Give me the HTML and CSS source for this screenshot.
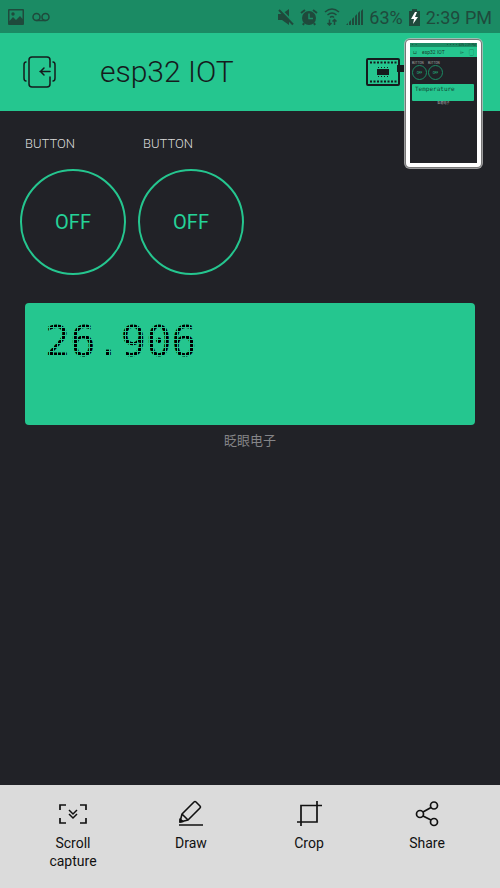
FILE: index.html
```html
<!DOCTYPE html>
<html lang="en">
<head>
<meta charset="utf-8">
<meta name="viewport" content="width=device-width, initial-scale=1">
<title>esp32 IOT</title>
<link rel="stylesheet" href="styles.css">
</head>
<body>
<div class="status">
  <svg width="16" height="16" viewBox="0 0 16 16" aria-hidden="true"><path fill="currentColor" fill-rule="evenodd" d="M1 0h14a1 1 0 0 1 1 1v14a1 1 0 0 1-1 1H1a1 1 0 0 1-1-1V1a1 1 0 0 1 1-1zm.5 1.500v10.500L5 8l3 3 4-4 2.500 3V1.500z"/><circle cx="5" cy="5" r="1.700" fill="currentColor"/></svg>
  <svg width="18" height="10" viewBox="0 0 18 10" fill="none" stroke="currentColor" stroke-width="1.500" aria-hidden="true"><circle cx="4.500" cy="5" r="3.500"/><circle cx="13.500" cy="5" r="3.500"/><path d="M4.500 8.500h9"/></svg>
  <div class="status-right">
    <svg width="16" height="17" viewBox="0 0 16 17" aria-hidden="true"><path fill="currentColor" d="M0 5h4L11 0v16l-7-5H0z"/><path d="M2 0l14 14" stroke="#1b8b64" stroke-width="2"/><path d="M1 1l14 14.500" stroke="currentColor" stroke-width="2"/></svg>
    <svg width="18" height="17" viewBox="0 0 18 17" aria-hidden="true"><circle cx="9" cy="9" r="7" fill="currentColor"/><path d="M1 4l4-3M17 4l-4-3M4 14l-1 2M14 14l1 2" stroke="currentColor" stroke-width="2"/><path d="M9 4.500V9.500h4" fill="none" stroke="#1b8b64" stroke-width="1.500"/></svg>
    <svg width="16" height="18" viewBox="0 0 16 18" fill="none" stroke="currentColor" stroke-width="1.500" aria-hidden="true"><path d="M1 4q7-6 14 0M3.500 7q4.500-4 9 0M6 9.500q2-2 4 0M5.500 11.500V17M3.500 15l2 2 2-2M10.500 17v-5.500M8.500 13.500l2-2 2 2"/></svg>
    <svg width="17" height="17" viewBox="0 0 17 17" aria-hidden="true"><path fill="currentColor" d="M0 16l2-2v2zM3 13l2-2v5H3zM6 10l2-2v8H6zM9 7l2-2v11H9zM12 4l2-2v14h-2zM15 2l2-2v16h-2z"/></svg>
    <span class="percent">63%</span>
    <svg class="battery" width="11" height="17" viewBox="0 0 11 17" aria-hidden="true"><path fill="currentColor" d="M3 0h5v2h3v15H0V2h3z"/><path fill="#fff" d="M6 3L2 10h3l-1 5 5-7H6l2-5z"/></svg>
    <time>2:39 PM</time>
  </div>
</div>
<header class="header">
  <button class="icon-button" aria-label="Exit project">
    <svg width="34" height="32" viewBox="0 0 34 32" fill="none" stroke="currentColor" stroke-width="1.500" stroke-linecap="round" aria-hidden="true"><path d="M28 11V4q0-3-3-3H10Q7 1 7 4v24q0 3 3 3h15q3 0 3-3v-7M28 15.500H18M22 12l-3.500 3.500L22 19M4 6Q2 6 2 9v13q0 3 2 3M31 6q2 0 2 3v13q0 3-2 3"/></svg>
  </button>
  <h1>esp32 IOT</h1>
  <button class="icon-button board" aria-label="Devices">
    <svg width="38" height="28" viewBox="0 0 38 28" aria-hidden="true"><rect x="1" y="1" width="32" height="26" rx="1" fill="none" stroke="currentColor" stroke-width="2"/><path fill="currentColor" d="M11 11h12v6H11zM31 7h7v7h-7z"/><path stroke="currentColor" stroke-width="2" stroke-dasharray="2 1.500" d="M4 4.500h27M4 23.500h27"/><path stroke="currentColor" stroke-dasharray="1 2" d="M12 9.500h10M12 18.500h10"/></svg>
  </button>
</header>
<aside class="preview" aria-label="Screenshot preview">
  <div class="preview-screen">
    <div class="preview-status">▪ ▪<span>▪▪▪▪ 63% 2:39 PM</span></div>
    <div class="preview-header"><span>⊔</span><b>esp32 IOT</b><span>⌲</span><span>▢</span></div>
    <div class="preview-widgets"><div>BUTTON<i>OFF</i></div><div>BUTTON<i>OFF</i></div></div>
    <div class="preview-display">Temperature</div>
    <div class="preview-caption">眨眼电子</div>
  </div>
</aside>
<main class="project">
  <div class="widgets">
    <div class="widget"><label for="b1">BUTTON</label><button id="b1" class="round">OFF</button></div>
    <div class="widget"><label for="b2">BUTTON</label><button id="b2" class="round">OFF</button></div>
  </div>
  <div class="display"><output class="reading">26.906</output></div>
  <p class="caption">眨眼电子</p>
</main>
<nav class="actions">
  <button><svg width="30" height="28" viewBox="0 0 30 28" fill="none" stroke="currentColor" stroke-width="1.700" aria-hidden="true"><path d="M2 11V6h6M22 6h6v5M28 19v5h-6M8 24H2v-5"/><path d="M11 11l4 4 4-4M11 15l4 4 4-4" stroke-width="1.500"/></svg>Scroll<br>capture</button>
  <button><svg width="30" height="28" viewBox="0 0 30 28" fill="none" stroke="currentColor" stroke-width="1.600" stroke-linejoin="round" aria-hidden="true"><path d="M4 23l2-8L18 3q1-1 2 0l4 4q1 1 0 2L12 21zM6 15l6 6M3 26h24"/><path fill="currentColor" d="M4 23v-3l3 2.500z"/></svg>Draw</button>
  <button><svg width="30" height="28" viewBox="0 0 30 28" fill="none" stroke="currentColor" stroke-width="1.700" aria-hidden="true"><path d="M3 23h20V2M7 27V6.500h21"/></svg>Crop</button>
  <button><svg width="30" height="28" viewBox="0 0 30 28" fill="none" stroke="currentColor" stroke-width="1.700" aria-hidden="true"><circle cx="8" cy="15" r="3.500"/><circle cx="22" cy="6.500" r="3.500"/><circle cx="22" cy="23" r="3.500"/><path d="M11 13l8-4.500M11 17l8 4"/></svg>Share</button>
</nav>
</body>
</html>
```
FILE: styles.css
```css
* { box-sizing: border-box; }
body {
  margin: 0;
  min-height: 100vh;
  display: flex;
  flex-direction: column;
  position: relative;
  background: #212227;
  color: #151b1d;
  font-family: Roboto, "Noto Sans CJK SC", sans-serif;
}
button { border: 0; padding: 0; background: none; color: inherit; font: inherit; }
svg { display: block; flex: none; }
.status {
  height: 33px;
  padding: 1px 8px 0;
  display: flex;
  align-items: center;
  gap: 8px;
  background: #1b8b64;
  color: #1f4a3c;
  font-size: 18px;
}
.status-right { margin-left: auto; display: flex; align-items: center; gap: 6px; }
.header {
  height: 78px;
  padding: 0 96px 0 22px;
  display: flex;
  align-items: center;
  background: #25c68f;
}
h1 { margin: 0 0 0 44px; font-size: 30px; font-weight: 300; line-height: 36px; }
.board { margin-left: auto; }
.project { flex: 1; padding: 24px 25px; }
.widgets { display: flex; gap: 12px; margin-left: -5px; }
.widget { width: 106px; }
.widget label {
  display: block;
  padding-left: 5px;
  margin-bottom: 16px;
  font-size: 13px;
  line-height: 18px;
  font-weight: 300;
  color: #dadada;
}
.round {
  width: 106px;
  height: 106px;
  border: 2px solid #25c68f;
  border-radius: 50%;
  color: #25d398;
  font-size: 20px;
  font-weight: 400;
}
.display {
  min-height: 122px;
  margin-top: 28px;
  padding: 16px 20px;
  border-radius: 4px;
  background: #25c68f;
}
.reading {
  display: inline-block;
  position: relative;
  font: 42px/46px "DejaVu Sans Mono", monospace;
  color: #000;
}
.reading::after {
  content: "";
  position: absolute;
  inset: 0;
  background:
    repeating-linear-gradient(90deg, #25c68f 0 1px, transparent 1px 4px),
    repeating-linear-gradient(#25c68f 0 1px, transparent 1px 4px);
}
.caption { margin: 6px 0 0; text-align: center; font-size: 13px; line-height: 20px; color: #858588; }
.actions {
  min-height: 103px;
  padding: 14px;
  display: grid;
  grid-template-columns: repeat(4, 1fr);
  background: #dbdbdb;
}
.actions button {
  display: flex;
  flex-direction: column;
  align-items: center;
  font-size: 14px;
  line-height: 18px;
  color: #111;
}
.actions svg { margin-bottom: 7px; }
.preview {
  position: absolute;
  top: 40px;
  right: 19px;
  width: 75px;
  height: 127px;
  padding: 3px 4px 4px;
  border-radius: 4px;
  background: #fff;
  box-shadow: 0 0 0 1px #777, 0 0 0 2px #bbbc;
}
.preview-screen { height: 120px; background: #212227; overflow: hidden; font-size: 3px; line-height: 4px; color: #aaa; }
.preview-status { height: 4px; padding: 0 1px; display: flex; justify-content: space-between; background: #1b8b64; color: #153d30; }
.preview-header { height: 10px; padding: 0 3px; display: flex; align-items: center; gap: 5px; background: #25c68f; color: #183c30; font-size: 5px; }
.preview-header b { font-weight: 400; margin-right: auto; }
.preview-widgets { display: flex; gap: 1px; padding: 4px 2px 3px; }
.preview-widgets div { width: 15px; }
.preview-widgets i {
  display: grid;
  place-items: center;
  width: 15px;
  height: 15px;
  border: 1px solid #1b8b64;
  border-radius: 50%;
  color: #25c68f;
  font-style: normal;
}
.preview-display {
  height: 17px;
  margin: 1px 3px 0 2px;
  padding: 0 3px;
  border-radius: 1px;
  background: #25c68f;
  color: #124b38;
  font: 6px/10px "DejaVu Sans Mono", monospace;
}
.preview-caption { text-align: center; }
```
